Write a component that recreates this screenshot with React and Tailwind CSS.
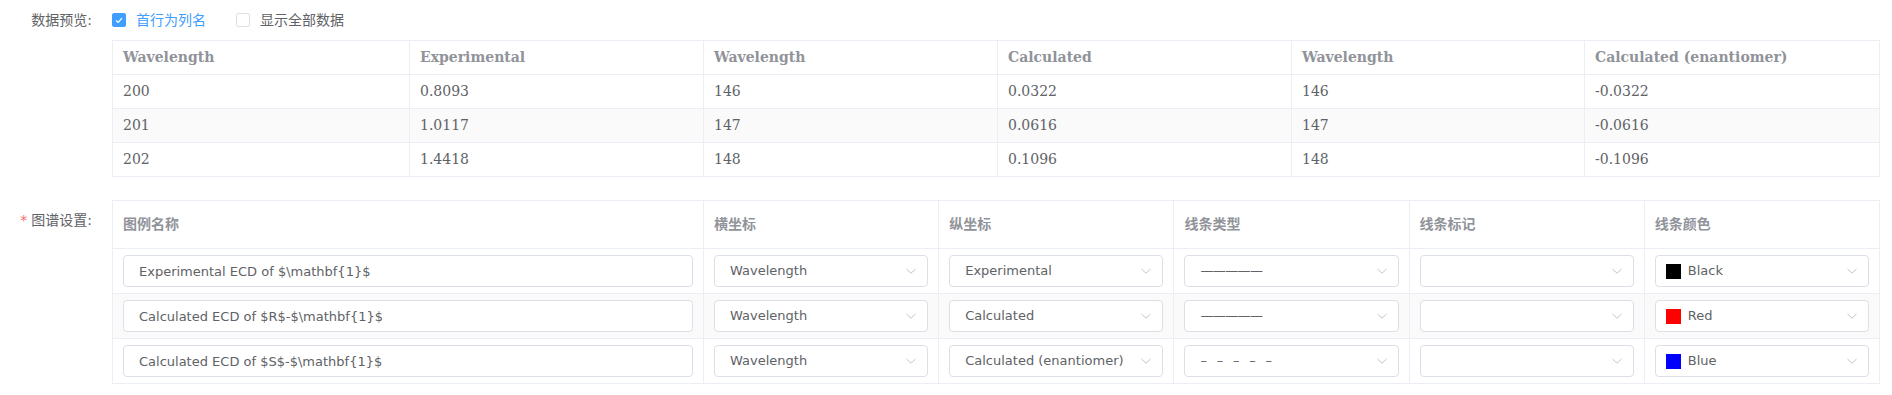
import { useState } from 'react'

const preview = {
  headers: ['Wavelength', 'Experimental', 'Wavelength', 'Calculated', 'Wavelength', 'Calculated (enantiomer)'],
  rows: [
    ['200', '0.8093', '146', '0.0322', '146', '-0.0322'],
    ['201', '1.0117', '147', '0.0616', '147', '-0.0616'],
    ['202', '1.4418', '148', '0.1096', '148', '-0.1096'],
  ],
}

const series = [
  { name: 'Experimental ECD of $\\mathbf{1}$', x: 'Wavelength', y: 'Experimental', line: 'solid', color: 'Black', swatch: 'bg-[#000000]' },
  { name: 'Calculated ECD of $R$-$\\mathbf{1}$', x: 'Wavelength', y: 'Calculated', line: 'solid', color: 'Red', swatch: 'bg-[#ff0000]' },
  { name: 'Calculated ECD of $S$-$\\mathbf{1}$', x: 'Wavelength', y: 'Calculated (enantiomer)', line: 'dashed', color: 'Blue', swatch: 'bg-[#0000ff]' },
]

const font = 'font-["DejaVu_Sans","Noto_Sans_CJK_SC",sans-serif]'

export default function App() {
  const [firstRowHeader, setFirstRowHeader] = useState(true)
  const [showAll, setShowAll] = useState(false)

  return (
    <div className={`${font} min-h-[395px] bg-white pr-[12px] text-[14px] text-[#606266]`}>
      <div className="flex">
        <label className="h-[40px] w-[92px] shrink-0 text-right leading-[40px]">数据预览:</label>
        <div className="ml-[20px] flex-1">
          <div className="flex h-[40px] items-center">
            <Checkbox checked={firstRowHeader} onChange={setFirstRowHeader} label="首行为列名" />
            <div className="w-[30px]" />
            <Checkbox checked={showAll} onChange={setShowAll} label="显示全部数据" />
          </div>
          <div className='grid grid-cols-[297px_294px_294px_294px_293px_1fr] border-l border-t border-[#ebeef5] font-["DejaVu_Serif",serif] text-[14px]'>
            {preview.headers.map((h, i) => (
              <div key={i} className="flex h-[34px] items-center border-b border-r border-[#ebeef5] px-[10px] font-bold text-[#909399]">
                {h}
              </div>
            ))}
            {preview.rows.map((row, r) =>
              row.map((cell, c) => (
                <div
                  key={`${r}-${c}`}
                  className={`flex h-[34px] items-center border-b border-r border-[#ebeef5] px-[10px] ${r === 1 ? 'bg-[#fafafa]' : 'bg-white'}`}
                >
                  {cell}
                </div>
              ))
            )}
          </div>
        </div>
      </div>

      <div className="mt-[23px] flex">
        <label className="h-[40px] w-[92px] shrink-0 text-right leading-[40px]">
          <span className="mr-[4px] text-[#f56c6c]">*</span>图谱设置:
        </label>
        <div className="ml-[20px] flex-1">
          <div className="grid grid-cols-[591px_repeat(5,1fr)] border-l border-t border-[#ebeef5]">
            {['图例名称', '横坐标', '纵坐标', '线条类型', '线条标记', '线条颜色'].map((h) => (
              <div key={h} className="flex h-[48px] items-center border-b border-r border-[#ebeef5] px-[10px] font-bold text-[#909399]">
                {h}
              </div>
            ))}
            {series.map((s, r) => {
              const bg = r === 1 ? 'bg-[#fafafa]' : 'bg-white'
              const cell = `flex h-[45px] items-center border-b border-r border-[#ebeef5] px-[10px] ${bg}`
              return [
                <div key={`${r}-name`} className={cell}>
                  <input
                    className="h-[32px] w-full rounded-[4px] border border-[#dcdfe6] bg-white px-[15px] text-[13px] text-[#606266] outline-none"
                    defaultValue={s.name}
                  />
                </div>,
                <div key={`${r}-x`} className={cell}>
                  <Select>{s.x}</Select>
                </div>,
                <div key={`${r}-y`} className={cell}>
                  <Select>{s.y}</Select>
                </div>,
                <div key={`${r}-line`} className={cell}>
                  <Select>
                    {s.line === 'solid' ? (
                      <span className="tracking-[-0.6px]">—————</span>
                    ) : (
                      <span className="whitespace-pre tracking-[0.5px]">–  –  –  –  –</span>
                    )}
                  </Select>
                </div>,
                <div key={`${r}-marker`} className={cell}>
                  <Select />
                </div>,
                <div key={`${r}-color`} className={cell}>
                  <Select pad="pl-[10px]">
                    <span className={`mr-[7px] inline-block h-[15px] w-[15px] ${s.swatch}`} />
                    {s.color}
                  </Select>
                </div>,
              ]
            })}
          </div>
        </div>
      </div>
    </div>
  )
}

function Checkbox({ checked, onChange, label }) {
  return (
    <label className="flex cursor-pointer items-center" onClick={() => onChange(!checked)}>
      <span
        className={`flex h-[14px] w-[14px] items-center justify-center rounded-[2px] border ${
          checked ? 'border-[#409eff] bg-[#409eff]' : 'border-[#dcdfe6] bg-white'
        }`}
      >
        {checked && (
          <svg width="8" height="7" viewBox="0 0 8 7" fill="none">
            <path d="M1 3.5 L3.2 5.5 L7 1.2" stroke="white" strokeWidth="1.2" />
          </svg>
        )}
      </span>
      <span className={`ml-[10px] ${checked ? 'text-[#409eff]' : 'text-[#606266]'}`}>{label}</span>
    </label>
  )
}

function Select({ children, pad = 'pl-[15px]' }) {
  return (
    <div className={`flex h-[32px] w-full items-center rounded-[4px] border border-[#dcdfe6] bg-white ${pad} pr-[10px] text-[13px] text-[#606266]`}>
      <div className="flex flex-1 items-center overflow-hidden whitespace-nowrap">{children}</div>
      <svg width="12" height="12" viewBox="0 0 12 12" fill="none" className="ml-[4px] shrink-0">
        <path d="M1.5 4 L6 8.2 L10.5 4" stroke="#c0c4cc" strokeWidth="1" />
      </svg>
    </div>
  )
}
